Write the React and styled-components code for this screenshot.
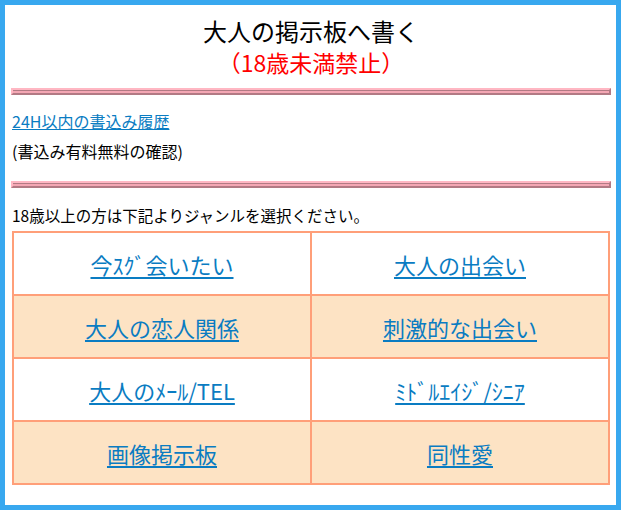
import styled, { createGlobalStyle } from 'styled-components';

const GlobalStyle = createGlobalStyle`
  html, body {
    margin: 0;
    padding: 0;
    background: #ffffff;
  }
  body {
    font-family: "Noto Sans CJK JP", "Noto Sans", sans-serif;
    color: #000;
  }
`;

const Frame = styled.div`
  box-sizing: border-box;
  width: 621px;
  height: 510px;
  border: 5px solid #38a8ef;
  padding: 0 6px 0 7px;
  overflow: hidden;
`;

const Header = styled.header`
  display: flex;
  flex-direction: column;
  align-items: center;
  gap: 3px;
  padding-top: 12px;
`;

const Title = styled.h1`
  margin: 0;
  font-size: 24px;
  font-weight: normal;
  line-height: 28px;
`;

const Warning = styled.div`
  color: #ff0000;
  font-size: 23px;
  line-height: 28px;
`;

const Rule = styled.hr`
  box-sizing: border-box;
  height: 7px;
  margin: ${(p) => p.$top}px -1px 0;
  border: 0;
  border-top: 2px solid #ffb7c3;
  border-left: 2px solid #ffb7c3;
  border-bottom: 2px solid #b27a84;
  border-right: 2px solid #b27a84;
  background: linear-gradient(#b27a84 0 1px, #f4a7b4 1px);
`;

const InfoBlock = styled.div`
  display: flex;
  flex-direction: column;
  gap: 8px;
  margin-top: 15px;
  font-size: 16px;
  line-height: 22px;
`;

const TextLink = styled.a`
  color: #0a7cc2;
  text-decoration: underline;
  cursor: pointer;
  align-self: flex-start;
`;

const Note = styled.div`
  font-size: 15.5px;
  line-height: 22px;
  margin-top: 16px;
`;

const Grid = styled.div`
  display: grid;
  grid-template-columns: 1fr 1fr;
  margin-top: 5px;
  border: 1px solid #ff9f79;
`;

const Cell = styled.div`
  display: flex;
  align-items: center;
  justify-content: center;
  height: 61px;
  background: ${(p) => (p.$shaded ? '#fde3c4' : '#ffffff')};
  border: 1px solid #ff9f79;
`;

const GenreLink = styled.a`
  color: #0a7cc2;
  font-size: 22px;
  text-decoration: underline;
  text-underline-offset: 3px;
  cursor: pointer;
`;

const genres = [
  ['今ｽｸﾞ会いたい', '大人の出会い'],
  ['大人の恋人関係', '刺激的な出会い'],
  ['大人のﾒｰﾙ/TEL', 'ﾐﾄﾞﾙｴｲｼﾞ/ｼﾆｱ'],
  ['画像掲示板', '同性愛'],
];

export default function App() {
  return (
    <>
      <GlobalStyle />
      <Frame>
        <Header>
          <Title>大人の掲示板へ書く</Title>
          <Warning>（18歳未満禁止）</Warning>
        </Header>
        <Rule $top={12} />
        <InfoBlock>
          <TextLink>24H以内の書込み履歴</TextLink>
          <div>(書込み有料無料の確認)</div>
        </InfoBlock>
        <Rule $top={19} />
        <Note>18歳以上の方は下記よりジャンルを選択ください。</Note>
        <Grid>
          {genres.map((row, i) =>
            row.map((g) => (
              <Cell key={g} $shaded={i % 2 === 1}>
                <GenreLink>{g}</GenreLink>
              </Cell>
            ))
          )}
        </Grid>
      </Frame>
    </>
  );
}
